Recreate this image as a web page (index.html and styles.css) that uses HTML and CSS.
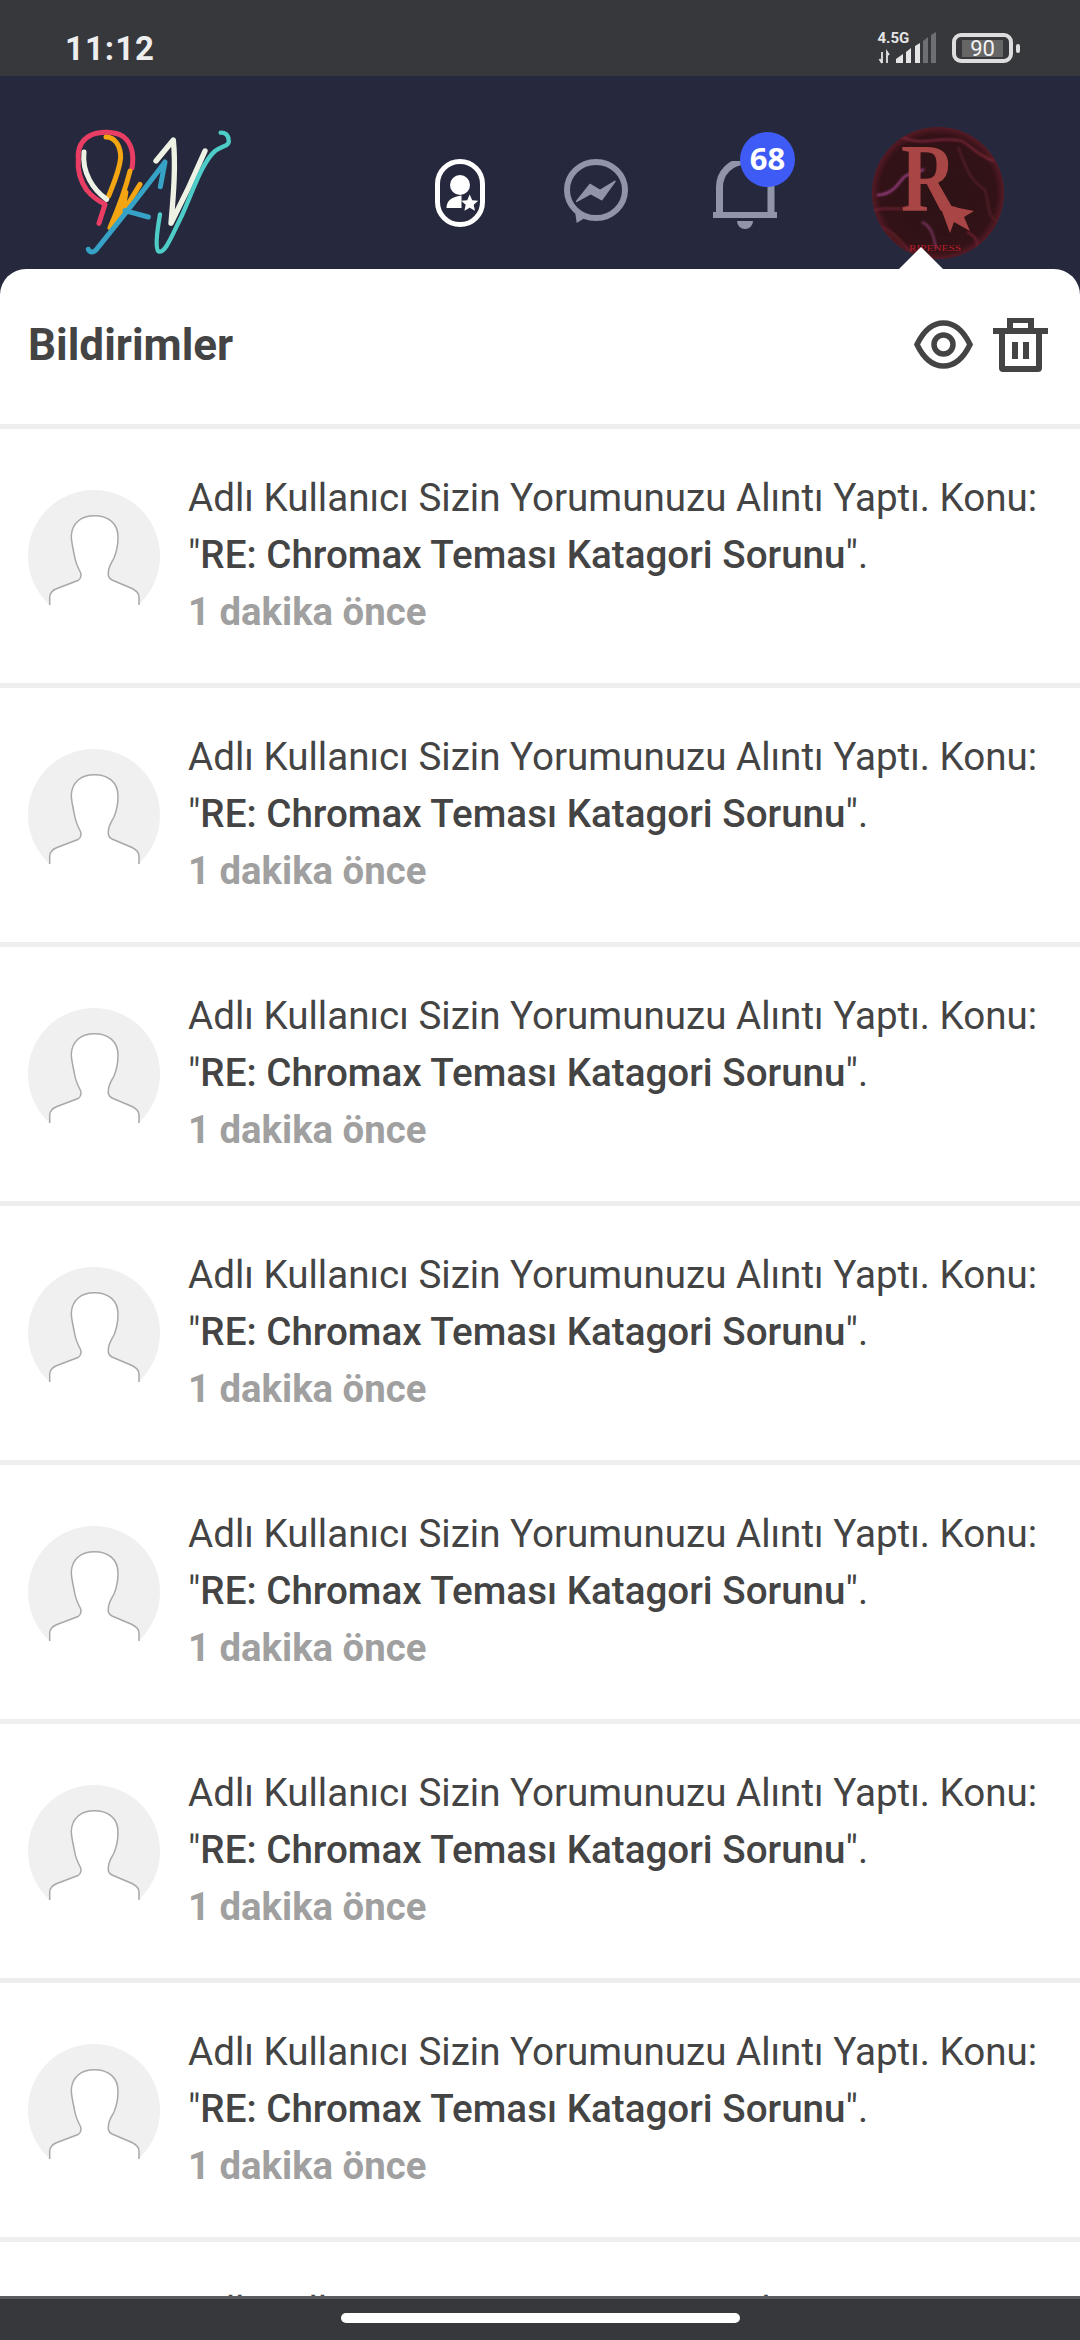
FILE: index.html
```html
<!DOCTYPE html>
<html lang="tr">
<head>
	<meta charset="UTF-8">
	<title>Bildirimler</title>
	<link rel="stylesheet" href="styles.css">
</head>
<body>
	<svg class="defs" width="0" height="0">
		<symbol id="no-avatar" viewBox="0 0 132 132">
			<circle cx="66" cy="66" r="66" fill="#f0f0f0"/>
			<path d="M21.7 132V107C22 102 25 100 29 98.500L50 90.500C53 89 53.500 85 52.500 82.500C49 76 47.500 72 46.500 66C45 58 43.300 52 43.300 46C44 33 53 25.700 66.700 25.700C80 25.700 90 33 90 47C90 55 88.500 62 86 68C84 72 81 76 80.500 81C80 85 80 88 84 90L104 98.500C108 100.500 111 103 111 107V132Z" fill="#fff" stroke="#a8a8a8" stroke-width="1.500"/>
			<rect x="0" y="115" width="132" height="17" fill="#fff"/>
		</symbol>
	</svg>

	<div class="status-bar">
		<span class="clock">11:12</span>
		<div class="status-right">
			<svg class="signal" width="62" height="32" viewBox="0 0 62 32">
				<text x="1.500" y="11" class="net-label">4.5G</text>
				<path d="M6 20V31M3.500 27L6 31M11 31V20L13 23" fill="none" stroke="#e4e4e4" stroke-width="1.800"/>
				<path d="M20 31V27L27 22V31Z" fill="#e4e4e4"/>
				<path d="M30 20L35 16V31H30Z" fill="#e4e4e4"/>
				<path d="M39 14L44 11V31H39Z" fill="#e4e4e4"/>
				<path d="M47 9L52 5V31H47Z" fill="#6e6f72"/>
				<path d="M55 3L60 0V31H55Z" fill="#6e6f72"/>
			</svg>
			<div class="battery"><span class="battery-level">90</span></div>
		</div>
	</div>

	<div class="navbar">
		<svg class="logo" width="190" height="150" viewBox="0 0 570 450" fill="none" stroke-linecap="round" stroke-linejoin="round" stroke-width="15">
			<path d="M216 156C222 120 218 85 190 62C165 45 120 45 92 58C65 72 52 95 55 130C52 160 58 190 80 222C95 240 115 255 135 265L117 322" stroke="#e93d63"/>
			<path d="M138 63C165 63 182 90 182 125C178 165 160 205 146 240" stroke="#f4a512"/>
			<path d="M210 165C200 205 180 265 150 335L178 305C190 290 215 245 240 205" stroke="#f4a512"/>
			<path d="M195 230L185 290L170 305" stroke="#f4a512" stroke-width="20"/>
			<path d="M72 108C65 170 100 222 140 250" stroke="#eef2e4"/>
			<path d="M85 400C90 410 100 410 108 402C170 325 250 225 315 138L301 212M195 284L265 303" stroke="#36a3c6"/>
			<path d="M288 135L340 72C348 150 340 240 333 322C370 250 405 175 435 105" stroke="#eef2e4" stroke-width="16"/>
			<path d="M300 295C293 335 285 395 295 406C315 415 335 360 365 300C395 235 425 140 465 105C485 90 510 90 506 72C505 58 498 50 482 50" stroke="#4ecdc8" stroke-width="13"/>
		</svg>

		<svg class="nav-badge-icon" width="50" height="68" viewBox="0 0 50 68">
			<rect x="2.500" y="2.500" width="45" height="63" rx="22.500" fill="none" stroke="#fff" stroke-width="5"/>
			<circle cx="25" cy="26" r="10" fill="#fff"/>
			<path d="M11.500 49C11.500 43 15 38 26.500 36.500V49Z" fill="#fff"/>
			<path d="M34.700 35.500L37.200 41.200L43.300 41.800L38.700 45.800L40 51.800L34.700 48.700L29.400 51.800L30.700 45.800L26.100 41.800L32.200 41.200Z" fill="#fff"/>
		</svg>

		<svg class="nav-chat" width="65" height="65" viewBox="0 0 65 65">
			<ellipse cx="32" cy="31" rx="29" ry="28" fill="none" stroke="#9195aa" stroke-width="6"/>
			<path d="M11 52L12.700 64L20 59.500Z" fill="#9195aa"/>
			<path d="M12.700 42.300L26 25.500L36 31.300L51 22.300L37.700 40.700L26.700 34.700Z" fill="#9195aa" stroke="#9195aa" stroke-width="1.500" stroke-linejoin="round"/>
		</svg>

		<div class="nav-bell">
			<svg width="64" height="68" viewBox="0 0 64 68">
				<path d="M6.500 52V26A25.750 25.750 0 0 1 58 26V52" fill="none" stroke="#9195aa" stroke-width="7"/>
				<rect x="0" y="51" width="64" height="6" fill="#9195aa"/>
				<path d="M24 60H40A8 8 0 0 1 24 60Z" fill="#9195aa"/>
			</svg>
			<span class="bell-count">68</span>
		</div>

		<svg class="nav-user" width="132" height="132" viewBox="0 0 132 132">
			<defs>
				<clipPath id="user-clip"><circle cx="66" cy="66" r="66"/></clipPath>
				<radialGradient id="user-bg" cx="50%" cy="50%" r="50%">
					<stop offset="0" stop-color="#2c1316"/>
					<stop offset="0.88" stop-color="#321216"/>
					<stop offset="1" stop-color="#571a25"/>
				</radialGradient>
				<filter id="user-blur"><feGaussianBlur stdDeviation="1.200"/></filter>
			</defs>
			<g clip-path="url(#user-clip)">
				<rect width="132" height="132" fill="url(#user-bg)"/>
				<g filter="url(#user-blur)" fill="none" stroke-width="2">
					<path d="M30 10C50 20 70 8 90 14C100 20 108 30 122 34" stroke="#7c2838"/>
					<path d="M5 68C20 68 25 58 32 50C40 44 48 46 52 42" stroke="#a84590"/>
					<path d="M0 84C18 78 26 86 40 78" stroke="#6e2230"/>
					<path d="M50 95C60 100 62 110 64 122" stroke="#7c3864"/>
					<path d="M86 20C92 34 96 52 112 62C118 70 112 90 128 96" stroke="#542028"/>
					<path d="M8 100C24 104 30 118 42 128" stroke="#60212c"/>
					<path d="M95 105C105 110 110 118 100 128" stroke="#6e2230"/>
				</g>
				<text x="0" y="84" class="user-letter" transform="translate(29 0) scale(0.78 1)">R</text>
				<path d="M64 68L72 78L102 84L92 90L98 104L82 95L78 106Z" fill="#a84646"/>
				<text x="37" y="124" class="user-name" textLength="52" lengthAdjust="spacingAndGlyphs">RIPENESS</text>
			</g>
		</svg>
	</div>

	<div class="panel">
		<span class="panel-arrow"></span>
		<div class="panel-sheet">
			<div class="panel-head">
				<h1 class="panel-title">Bildirimler</h1>
				<div class="panel-actions">
					<svg width="59" height="49" viewBox="0 0 59 49" fill="none" stroke="#444" stroke-width="5.500">
						<path d="M3 24.500C10 10 19 3 29.500 3C40 3 49 10 56 24.500C49 39 40 46 29.500 46C19 46 10 39 3 24.500Z"/>
						<circle cx="29.500" cy="24.500" r="9.500"/>
					</svg>
					<svg width="55" height="54" viewBox="0 0 55 54" fill="#444">
						<path d="M14 0H41V10H55V16H49V50Q49 54 45 54H10Q6 54 6 50V16H0V10H14ZM20 5V10H35V5ZM12 16V48H43V16Z" fill-rule="evenodd"/>
						<rect x="19" y="24" width="6" height="17"/>
						<rect x="30" y="24" width="6" height="17"/>
					</svg>
				</div>
			</div>

			<div class="note">
				<svg class="note-avatar" width="132" height="132"><use href="#no-avatar"/></svg>
				<div class="note-body">
					<p class="note-text">Adlı Kullanıcı Sizin Yorumunuzu Alıntı Yaptı. Konu: "<b>RE: Chromax Teması Katagori Sorunu</b>".</p>
					<p class="note-time">1 dakika önce</p>
				</div>
			</div>
			<div class="note">
				<svg class="note-avatar" width="132" height="132"><use href="#no-avatar"/></svg>
				<div class="note-body">
					<p class="note-text">Adlı Kullanıcı Sizin Yorumunuzu Alıntı Yaptı. Konu: "<b>RE: Chromax Teması Katagori Sorunu</b>".</p>
					<p class="note-time">1 dakika önce</p>
				</div>
			</div>
			<div class="note">
				<svg class="note-avatar" width="132" height="132"><use href="#no-avatar"/></svg>
				<div class="note-body">
					<p class="note-text">Adlı Kullanıcı Sizin Yorumunuzu Alıntı Yaptı. Konu: "<b>RE: Chromax Teması Katagori Sorunu</b>".</p>
					<p class="note-time">1 dakika önce</p>
				</div>
			</div>
			<div class="note">
				<svg class="note-avatar" width="132" height="132"><use href="#no-avatar"/></svg>
				<div class="note-body">
					<p class="note-text">Adlı Kullanıcı Sizin Yorumunuzu Alıntı Yaptı. Konu: "<b>RE: Chromax Teması Katagori Sorunu</b>".</p>
					<p class="note-time">1 dakika önce</p>
				</div>
			</div>
			<div class="note">
				<svg class="note-avatar" width="132" height="132"><use href="#no-avatar"/></svg>
				<div class="note-body">
					<p class="note-text">Adlı Kullanıcı Sizin Yorumunuzu Alıntı Yaptı. Konu: "<b>RE: Chromax Teması Katagori Sorunu</b>".</p>
					<p class="note-time">1 dakika önce</p>
				</div>
			</div>
			<div class="note">
				<svg class="note-avatar" width="132" height="132"><use href="#no-avatar"/></svg>
				<div class="note-body">
					<p class="note-text">Adlı Kullanıcı Sizin Yorumunuzu Alıntı Yaptı. Konu: "<b>RE: Chromax Teması Katagori Sorunu</b>".</p>
					<p class="note-time">1 dakika önce</p>
				</div>
			</div>
			<div class="note">
				<svg class="note-avatar" width="132" height="132"><use href="#no-avatar"/></svg>
				<div class="note-body">
					<p class="note-text">Adlı Kullanıcı Sizin Yorumunuzu Alıntı Yaptı. Konu: "<b>RE: Chromax Teması Katagori Sorunu</b>".</p>
					<p class="note-time">1 dakika önce</p>
				</div>
			</div>
			<div class="note">
				<svg class="note-avatar" width="132" height="132"><use href="#no-avatar"/></svg>
				<div class="note-body">
					<p class="note-text">Adlı Kullanıcı Sizin Yorumunuzu Alıntı Yaptı. Konu: "<b>RE: Chromax Teması Katagori Sorunu</b>".</p>
					<p class="note-time">1 dakika önce</p>
				</div>
			</div>
		</div>
	</div>

	<div class="home-bar"><span class="home-pill"></span></div>
</body>
</html>
```

FILE: styles.css
```css
* {
	padding: 0;
	margin: 0;
	box-sizing: border-box;
}
body {
	width: 1080px;
	height: 2340px;
	overflow: hidden;
	display: flex;
	flex-direction: column;
	background: #26293d;
	font-family: Roboto, "Noto Sans", sans-serif;
	color: #444;
}
.defs {
	position: absolute;
}

/* status bar */
.status-bar {
	height: 76px;
	flex: none;
	padding: 20px 60px 0 65px;
	display: flex;
	align-items: center;
	justify-content: space-between;
	background: #37383c;
	color: #eee;
}
.clock {
	font-size: 33px;
	font-weight: 700;
	letter-spacing: 1px;
}
.status-right {
	display: flex;
	align-items: center;
	gap: 14px;
}
.net-label {
	font-size: 15px;
	font-weight: 700;
	fill: #e4e4e4;
}
.battery {
	position: relative;
	width: 61px;
	height: 30px;
	border: 4px solid #ddd;
	border-radius: 9px;
	padding: 3px 6px 2px;
	margin-right: 7px;
}
.battery::after {
	content: "";
	position: absolute;
	right: -11px;
	top: 7px;
	width: 4px;
	height: 9px;
	background: #ddd;
	border-radius: 2px;
}
.battery-level {
	display: block;
	height: 17px;
	line-height: 17px;
	background: #666;
	color: #f2f2f2;
	font-size: 22px;
	text-align: center;
}

/* top nav */
.navbar {
	height: 193px;
	flex: none;
	padding: 40px 0 0 60px;
	display: flex;
	align-items: center;
	background: #26293d;
}
.logo {
	margin-top: -4px;
}
.nav-badge-icon {
	margin-left: 185px;
}
.nav-chat {
	margin-left: 79px;
	margin-top: -2px;
}
.nav-bell {
	position: relative;
	width: 64px;
	height: 68px;
	margin-left: 84px;
	margin-top: 4px;
}
.bell-count {
	position: absolute;
	left: 27px;
	top: -29px;
	width: 55px;
	height: 55px;
	line-height: 53px;
	border-radius: 50%;
	background: #3f5bf6;
	color: #fff;
	font-family: "Noto Sans", sans-serif;
	font-size: 31px;
	font-weight: 700;
	text-align: center;
}
.nav-user {
	margin-left: 95px;
}
.user-letter {
	font-family: "Liberation Serif", serif;
	font-size: 98px;
	font-weight: 700;
	fill: #a84646;
}
.user-name {
	font-family: "Liberation Serif", serif;
	font-size: 9px;
	fill: #b4202c;
}

/* notification panel */
.panel {
	position: relative;
	flex: 1;
	min-height: 0;
}
.panel-arrow {
	position: absolute;
	left: 899px;
	top: -22px;
	border-left: 22px solid transparent;
	border-right: 22px solid transparent;
	border-bottom: 22px solid #fff;
}
.panel-sheet {
	height: 100%;
	overflow: hidden;
	background: #fff;
	border-radius: 26px 26px 0 0;
}
.panel-head {
	height: 160px;
	padding: 0 32px 4px 28px;
	display: flex;
	align-items: center;
	justify-content: space-between;
	border-bottom: 5px solid #eee;
}
.panel-title {
	font-size: 44px;
	font-weight: 700;
	color: #444;
}
.panel-actions {
	display: flex;
	align-items: center;
	gap: 20px;
}
.note {
	height: 259px;
	padding-left: 28px;
	display: flex;
	align-items: center;
	gap: 28px;
	border-bottom: 5px solid #eee;
}
.note-avatar {
	flex: none;
}
.note-body {
	flex: 1;
	padding: 0 30px 4px 0;
}
.note-text {
	font-size: 38.600px;
	line-height: 57px;
}
.note-text b {
	font-weight: 500;
}
.note-time {
	font-size: 38.300px;
	line-height: 57px;
	font-weight: 700;
	color: #a0a0a0;
}

/* android home bar */
.home-bar {
	height: 44px;
	flex: none;
	padding-bottom: 3px;
	display: flex;
	align-items: center;
	justify-content: center;
	background: #37383c;
	border-top: 3px solid #5a5b5f;
}
.home-pill {
	width: 399px;
	height: 10px;
	border-radius: 5px;
	background: #fff;
}
```
